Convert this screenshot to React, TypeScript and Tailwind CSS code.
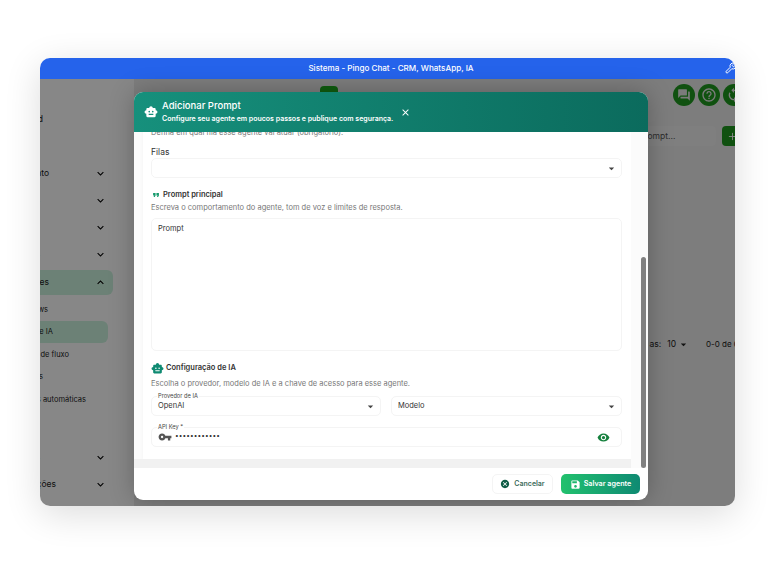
import React from 'react';
import {
  MdArrowDropDown,
  MdCancel,
  MdClose,
  MdExpandLess,
  MdExpandMore,
  MdFormatQuote,
  MdHelpOutline,
  MdQuestionAnswer,
  MdSave,
  MdSmartToy,
  MdSync,
  MdVisibility,
  MdVpnKey,
} from 'react-icons/md';
import { Plus, Wrench } from 'lucide-react';

const font = "font-['Inter','Liberation_Sans',sans-serif]";

function SideRow({ label, width, open }: { label: string; width: string; open?: boolean }) {
  return (
    <div className="flex h-[27px] items-center justify-between pr-[6px]">
      <span className={`flex justify-end whitespace-nowrap text-[8.5px] text-[#222] ${width}`}>{label}</span>
      {open ? <MdExpandLess className="text-[13px] text-black" /> : <MdExpandMore className="text-[13px] text-black" />}
    </div>
  );
}

function SubRow({ label, width, active }: { label: string; width: string; active?: boolean }) {
  return (
    <div className={`flex h-[22.5px] items-center rounded-r-md ${active ? 'mr-[5px] bg-[#cdf3df]' : ''}`}>
      <span className={`flex justify-end whitespace-nowrap text-[7.5px] text-[#222] ${width}`}>{label}</span>
    </div>
  );
}

function Background() {
  return (
    <div className="flex h-[427px]">
      <aside className="w-[94px] shrink-0 bg-white pt-[32px] pr-[21px]">
        <div className="flex h-[16px] items-center">
          <span className="flex w-[3px] justify-end whitespace-nowrap text-[9px] text-[#222]">Dashboard</span>
        </div>
        <div className="mt-[33px]">
          <SideRow label="Atendimento" width="w-[9px]" />
          <SideRow label="Contatos" width="w-0" />
          <SideRow label="Kanban" width="w-0" />
          <SideRow label="Tarefas" width="w-0" />
        </div>
        <div className="mt-[2px] flex h-[25px] items-center justify-between rounded-r-md bg-[#cdf3df] pr-[6px]">
          <span className="flex w-[9px] justify-end whitespace-nowrap text-[8.5px] text-[#222]">Automações</span>
          <MdExpandLess className="text-[13px] text-black" />
        </div>
        <div className="mt-[3px]">
          <SubRow label="Flows" width="w-[8px]" />
          <SubRow label="Agentes de IA" width="w-[13px]" active />
          <SubRow label="Construtor de fluxo" width="w-[29px]" />
          <SubRow label="Listas" width="w-[3px]" />
          <SubRow label="Respostas automáticas" width="w-[46px]" />
        </div>
        <div className="mt-[33px]">
          <SideRow label="Relatórios" width="w-0" />
          <SideRow label="Configurações" width="w-[16px]" />
        </div>
      </aside>
      <main className="flex-1 bg-[#ececec]">
        <div className="flex justify-end pt-[5px]">
          <span className="mr-[-10px] flex gap-[3px]">
            <span className="flex size-[22px] items-center justify-center rounded-full bg-[#1f9a1f] text-[#e8e8e8]">
              <MdQuestionAnswer className="text-[14px]" />
            </span>
            <span className="flex size-[22px] items-center justify-center rounded-full bg-[#1f9a1f] text-[#e8e8e8]">
              <MdHelpOutline className="text-[16px]" />
            </span>
            <span className="flex size-[22px] items-center justify-center rounded-full bg-[#1f9a1f] text-[#e8e8e8]">
              <MdSync className="text-[16px]" />
            </span>
          </span>
        </div>
        <div className="mt-[20px] flex justify-end gap-[6px]">
          <div className="flex h-[20px] w-[78px] items-center rounded bg-[#f0f0f0] text-[8.5px] text-[#555]">
            <span className="pl-[1px]">Prompt...</span>
          </div>
          <div className="flex h-[20px] w-[13px] items-center overflow-hidden rounded-l bg-[#1f9a1f] pl-[5px] text-white">
            <Plus className="size-[11px] shrink-0" />
          </div>
        </div>
        <div className="mt-[192px] flex justify-end gap-[16px] text-[8.5px] text-[#222]">
          <span className="flex items-center gap-[6px]">
            <span>as:</span>
            <span className="flex items-center gap-[1px]">
              10 <MdArrowDropDown className="text-[13px]" />
            </span>
          </span>
          <span className="w-[29px] text-[8px] whitespace-nowrap">0-0 de 0</span>
        </div>
      </main>
    </div>
  );
}

function Field({ label, className, children }: { label?: string; className?: string; children: React.ReactNode }) {
  return (
    <div className={`relative flex h-[20px] items-center rounded-[5px] border border-[#f4f4f4] bg-white px-[6px] ${className ?? ''}`}>
      {label && <span className="absolute top-[-5px] left-[5px] bg-white px-px text-[5.7px] leading-[8px] text-[#444]">{label}</span>}
      {children}
    </div>
  );
}

function Dialog() {
  return (
    <div className="absolute top-[34px] left-[94px] flex h-[408px] w-[514px] flex-col overflow-hidden rounded-[9px] bg-white shadow-[0_0_24px_rgba(0,0,0,0.25)]">
      <header className="z-10 flex h-[40px] shrink-0 items-center bg-gradient-to-r from-[#16907c] to-[#0b6b5d] pl-[10px] text-white">
        <MdSmartToy className="text-[14px]" />
        <div className="ml-[4px] w-[238px]">
          <div className="text-[9.5px] leading-[12px] font-medium">Adicionar Prompt</div>
          <div className="mt-[2px] text-[7px] leading-[10px] font-semibold whitespace-nowrap">
            Configure seu agente em poucos passos e publique com segurança.
          </div>
        </div>
        <MdClose className="text-[11px]" />
      </header>
      <div className="flex min-h-0 flex-1 bg-[#fbfbfb]">
        <div className="min-w-0 flex-1 overflow-hidden">
          <div className="mt-[-4px] ml-[9px] h-[331px] w-[488px] bg-white pr-[9px] pl-[8px] shadow-[0_0_3px_rgba(0,0,0,0.04)]">
            <p className="text-[7.5px] leading-[9px] text-[#777]">Defina em qual fila esse agente vai atuar (obrigatório).</p>
            <div className="mt-[9px] text-[8.5px] leading-[12px] text-[#333]">Filas</div>
            <Field className="justify-end !pr-[3px]">
              <MdArrowDropDown className="text-[13px] text-[#444]" />
            </Field>
            <div className="mt-[11px] flex h-[12px] items-center gap-[2px] text-[7.5px] font-semibold text-[#333]">
              <MdFormatQuote className="text-[10px] text-[#159a6c]" />
              Prompt principal
            </div>
            <p className="text-[7.5px] leading-[13px] text-[#777]">
              Escreva o comportamento do agente, tom de voz e limites de resposta.
            </p>
            <div className="mt-[4px] h-[133px] rounded-[5px] border border-[#f4f4f4] px-[6px] pt-[4px] text-[7.5px] leading-[12px] text-[#333]">
              Prompt
            </div>
            <div className="mt-[10px] flex h-[14px] items-center gap-[2px] text-[7.5px] font-semibold text-[#333]">
              <MdSmartToy className="text-[13px] text-[#0f8a72]" />
              Configuração de IA
            </div>
            <p className="mt-[2px] text-[7.5px] leading-[13px] text-[#777]">
              Escolha o provedor, modelo de IA e a chave de acesso para esse agente.
            </p>
            <div className="mt-[6px] flex gap-[10px]">
              <Field label="Provedor de IA" className="w-[230px] justify-between !pr-[3px] text-[7.5px] text-[#333]">
                OpenAI
                <MdArrowDropDown className="text-[13px] text-[#444]" />
              </Field>
              <Field className="flex-1 justify-between !pr-[3px] text-[7.5px] text-[#333]">
                Modelo
                <MdArrowDropDown className="text-[13px] text-[#444]" />
              </Field>
            </div>
            <Field label="API Key *" className="mt-[11px] !pr-[11px]">
              <MdVpnKey className="text-[14px] text-[#555]" />
              <span className="ml-[3px] text-[6.5px] tracking-[0.1px] text-[#333]">••••••••••••</span>
              <MdVisibility className="ml-auto text-[13px] text-[#15803d]" />
            </Field>
          </div>
          <div className="h-[9px] bg-[#f1f1f1]" />
        </div>
        <div className="flex w-[17px] shrink-0 flex-col justify-end pr-[2px] pl-[10px]">
          <div className="h-[211px] w-[5px] rounded-full bg-[#808080]" />
        </div>
      </div>
      <footer className="flex h-[32px] shrink-0 items-center justify-end gap-[8px] pr-[8px]">
        <button className="flex h-[20px] w-[61px] items-center justify-center gap-[4px] rounded-[5px] border border-[#f4f4f4] text-[7px] font-semibold text-[#3d6b5c]">
          <MdCancel className="text-[10px] text-[#0f5c46]" />
          Cancelar
        </button>
        <button className="flex h-[20px] w-[79px] items-center justify-center gap-[3px] rounded-[5px] bg-gradient-to-r from-[#22c16d] to-[#0f8a72] text-[7.2px] font-semibold text-white">
          <MdSave className="text-[11px]" />
          Salvar agente
        </button>
      </footer>
    </div>
  );
}

export default function App() {
  return (
    <div className={`h-[564px] w-[782px] bg-white pt-[58px] pl-[40px] ${font}`}>
      <div className="relative h-[448px] w-[695px] overflow-hidden rounded-[10px] shadow-[0_8px_36px_rgba(0,0,0,0.14)]">
        <div className="relative flex h-[21px] items-center justify-center bg-[#2563eb] pl-[7px] text-[8.1px] font-medium text-white">
          Sistema - Pingo Chat - CRM, WhatsApp, IA
          <Wrench className="absolute top-[4px] right-[-2px] size-[12px]" />
        </div>
        <Background />
        <div className="absolute inset-x-0 top-[21px] bottom-0 bg-black/[.47]" />
        <div className="absolute top-[28px] left-[280px] h-[8px] w-[18px] rounded-t bg-[#0f5c0f]" />
        <Dialog />
      </div>
    </div>
  );
}
